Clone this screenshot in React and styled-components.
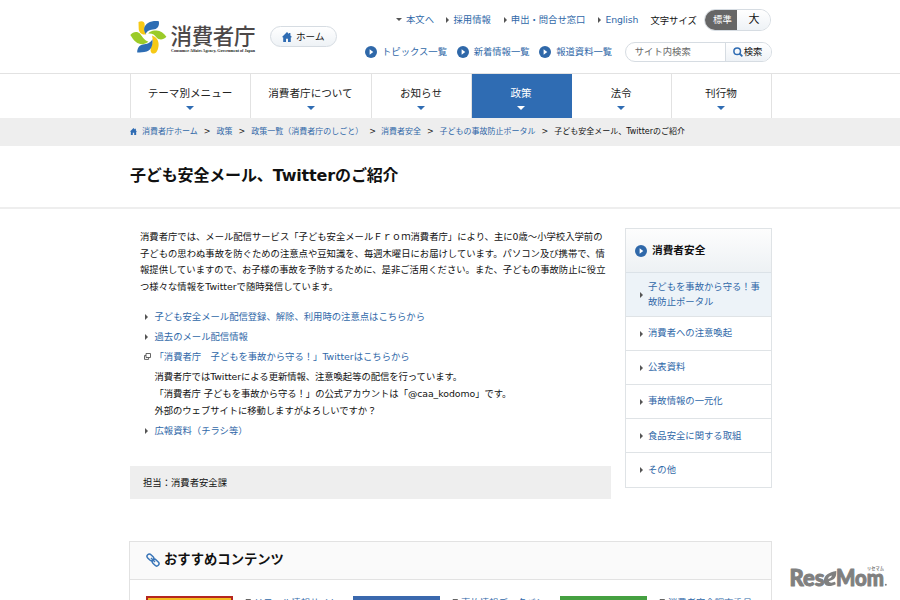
import styled, { createGlobalStyle, css } from "styled-components"

const topLinks = [
  { label: "本文へ", down: true },
  { label: "採用情報" },
  { label: "申出・問合せ窓口" },
  { label: "English" },
]

const listLinks = ["トピックス一覧", "新着情報一覧", "報道資料一覧"]

const navItems = [
  { label: "テーマ別メニュー", width: 120 },
  { label: "消費者庁について", width: 121 },
  { label: "お知らせ", width: 100 },
  { label: "政策", width: 100, active: true },
  { label: "法令", width: 100 },
  { label: "刊行物", width: 100 },
]

const crumbs = [
  { label: "消費者庁ホーム", width: 56 },
  { label: "政策", width: 16 },
  { label: "政策一覧（消費者庁のしごと）", width: 112 },
  { label: "消費者安全", width: 40 },
  { label: "子どもの事故防止ポータル", width: 96 },
]

const sideItems = [
  { label: "子どもを事故から守る！事故防止ポータル", active: true },
  { label: "消費者への注意喚起" },
  { label: "公表資料" },
  { label: "事故情報の一元化" },
  { label: "食品安全に関する取組" },
  { label: "その他" },
]

const cards = [
  { label: "リコール情報サイト", color: "#f3bd20", border: "#b5261e" },
  { label: "事故情報データバンク", color: "#3a68ad" },
  { label: "消費者安全調査委員会", color: "#45a041" },
]

function HomeIcon({ size }) {
  return (
    <svg width={size} height={size} viewBox="0 0 10 10" fill="#2f6cb3">
      <path d="M5 0 L0 5 L1.2 5.4 V10 H4 V6.8 H6 V10 H8.8 V5.4 L10 5 L8.4 3.4 V1 H7 V2 Z" />
    </svg>
  )
}

function CircleArrow() {
  return (
    <svg width="12" height="12" viewBox="0 0 12 12">
      <circle cx="6" cy="6" r="6" fill="#2f68a9" />
      <path d="M4.6 3.3 L8.3 6 L4.6 8.7 Z" fill="#fff" />
    </svg>
  )
}

function WindowIcon() {
  return (
    <svg width="7" height="7" viewBox="0 0 7 7" fill="none" stroke="#555">
      <path d="M2 .5 H6.5 V4.5 H2 Z M2 2.5 H.5 V6.4 H4.6 V4.5" strokeWidth=".9" />
    </svg>
  )
}

function ChainIcon() {
  return (
    <svg width="14" height="14" viewBox="0 0 14 14" fill="none" stroke="#3a76b8" strokeWidth="1.5">
      <rect x="0.6" y="2.1" width="7.6" height="4.6" rx="2.3" transform="rotate(45 4.4 4.4)" />
      <rect x="5.8" y="7.3" width="7.6" height="4.6" rx="2.3" transform="rotate(45 9.6 9.6)" />
      <path d="M5 5 L9 9" />
    </svg>
  )
}

function Logo() {
  return (
    <svg width="128" height="36" viewBox="0 0 128 36">
      <path d="M8.5 2 C12 .5 15 1.5 14.7 5.5 C14.5 9 14 11.5 16.4 14.2 C12 15.5 8.6 12.5 8.7 8.5 Z" fill="#f6c916" />
      <path d="M28.8 1.2 C29.7 5 28 8.6 24.5 9.2 C20 9.8 17.5 10.4 15.7 14 C12.8 9.5 14 5.5 18 3 C21 1.2 25 .8 28.8 1.2 Z" fill="#2d6db4" />
      <path d="M24.4 10.6 C29.2 9.7 33.4 12 36.4 16.8 C33 20.2 29 20.2 26.3 17.2 C24.5 14.8 22.4 13.2 18.2 13.6 C19.6 11.6 22 11 24.4 10.6 Z" fill="#9bcb28" />
      <path d="M22 15.6 C26.6 17.1 28.9 21 28.6 25.2 C28.3 29.6 26.7 33 24 33.6 C20.3 33.7 19.9 30 21.4 26.5 C22.8 23 23 19.5 22 15.6 Z" fill="#f6c916" />
      <path d="M22.4 19.3 C23 25.2 21.4 29.8 16.7 31.5 C13.5 32.6 10.5 32.2 7.2 32.6 C7.2 28.8 9 25.3 12.8 24.6 C17 23.9 20 23.4 22.4 19.3 Z" fill="#2d6db4" />
      <path d="M18.4 21.8 C14.5 25.1 9.3 24.8 6 22.1 C3.4 20 2 17.5 .3 15 C3 11.6 7.4 10.8 10.1 13.8 C12.5 16.8 14 20.2 18.4 21.8 Z" fill="#9bcb28" />
      <LogoName x="40.5" y="24.4" textLength="85">消費者庁</LogoName>
      <LogoSub x="41" y="32" textLength="84" lengthAdjust="spacingAndGlyphs">
        Consumer Affairs Agency, Government of Japan
      </LogoSub>
    </svg>
  )
}

function Watermark() {
  return (
    <WatermarkBox>
      <svg width="100" height="26" viewBox="0 0 100 26" fill="#808080">
        <MarkText x="1.5" y="20.6" textLength="35" lengthAdjust="spacingAndGlyphs">Res</MarkText>
        <path d="M35.8 16 C36 10 41 7.5 48.3 6 C48.5 12 47 14.8 40.8 16.2 C41.5 18 44 18 47 16.8 L47.8 19.3 C42 22.5 35.8 21.5 35.8 16 Z" />
        <path d="M39.8 13.8 C40.8 11.8 42 11 43.8 10.5 C43.8 12.4 42.2 13.4 39.8 13.8 Z" fill="#fff" />
        <MarkText x="48" y="20.6" textLength="48" lengthAdjust="spacingAndGlyphs">Mom</MarkText>
        <circle cx="97.8" cy="19.8" r="1" />
        <MarkKana x="79" y="4.8" textLength="17">リセマム</MarkKana>
      </svg>
    </WatermarkBox>
  )
}

export default function App() {
  return (
    <>
      <GlobalStyle />
      <Page>
        <Header>
          <LogoArea>
            <Logo />
          </LogoArea>
          <HomeButton>
            <HomeIcon size={10} />
            ホーム
          </HomeButton>
          <Tools>
            <TopRow>
              {topLinks.map((link) => (
                <TopLink key={link.label}>
                  {link.down ? <SmallDown /> : <SmallRight />}
                  {link.label}
                </TopLink>
              ))}
              <SizeLabel>文字サイズ</SizeLabel>
              <SizeSwitch>
                <SizeOption $active>標準</SizeOption>
                <SizeOption>大</SizeOption>
              </SizeSwitch>
            </TopRow>
            <SecondRow>
              {listLinks.map((label) => (
                <ListLink key={label}>
                  <CircleArrow />
                  {label}
                </ListLink>
              ))}
              <Search>
                <SearchField>サイト内検索</SearchField>
                <SearchButton>
                  <svg width="10" height="10" viewBox="0 0 10 10" fill="none" stroke="#2f6cb3">
                    <circle cx="4.2" cy="4.2" r="3.3" strokeWidth="1.5" />
                    <path d="M6.5 6.5 L9.4 9.4" strokeWidth="1.8" />
                  </svg>
                  検索
                </SearchButton>
              </Search>
            </SecondRow>
          </Tools>
        </Header>

        <Nav>
          {navItems.map((item) => (
            <NavItem key={item.label} $width={item.width} $active={item.active}>
              {item.label}
              <NavArrow $active={item.active} />
            </NavItem>
          ))}
        </Nav>

        <Breadcrumb>
          <HomeIcon size={7} />
          {crumbs.map((crumb) => (
            <Crumb key={crumb.label} $width={crumb.width}>
              {crumb.label}
            </Crumb>
          ))}
          <span>子ども安全メール、Twitterのご紹介</span>
        </Breadcrumb>

        <TitleBar>
          <h1>子ども安全メール、Twitterのご紹介</h1>
        </TitleBar>

        <Content>
          <Main>
            <Lead>
              消費者庁では、メール配信サービス「子ども安全メールＦｒｏｍ消費者庁」により、主に0歳～小学校入学前の<br />
              子どもの思わぬ事故を防ぐための注意点や豆知識を、毎週木曜日にお届けしています。パソコン及び携帯で、情<br />
              報提供していますので、お子様の事故を予防するために、是非ご活用ください。また、子どもの事故防止に役立<br />
              つ様々な情報をTwitterで随時発信しています。
            </Lead>
            <Links>
              <LinkRow>
                <SmallRight />
                <a>子ども安全メール配信登録、解除、利用時の注意点はこちらから</a>
              </LinkRow>
              <LinkRow>
                <SmallRight />
                <a>過去のメール配信情報</a>
              </LinkRow>
              <LinkRow>
                <WindowIcon />
                <a>「消費者庁　子どもを事故から守る！」Twitterはこちらから</a>
              </LinkRow>
              <Note>
                消費者庁ではTwitterによる更新情報、注意喚起等の配信を行っています。<br />
                「消費者庁 子どもを事故から守る！」の公式アカウントは「@caa_kodomo」です。<br />
                外部のウェブサイトに移動しますがよろしいですか？
              </Note>
              <LinkRow>
                <SmallRight />
                <a>広報資料（チラシ等）</a>
              </LinkRow>
            </Links>
            <Section>担当：消費者安全課</Section>
          </Main>

          <Side>
            <SideTitle>
              <CircleArrow />
              消費者安全
            </SideTitle>
            {sideItems.map((item) => (
              <SideItem key={item.label} $active={item.active}>
                <SmallRight />
                <span>{item.label}</span>
              </SideItem>
            ))}
          </Side>
        </Content>

        <Recommend>
          <RecommendTitle>
            <ChainIcon />
            おすすめコンテンツ
          </RecommendTitle>
          <Cards>
            {cards.map((card) => (
              <Card key={card.label}>
                <Thumb $color={card.color} $border={card.border} />
                <WindowIcon />
                <span>{card.label}</span>
              </Card>
            ))}
          </Cards>
        </Recommend>
        <Watermark />
      </Page>
    </>
  )
}

const blue = "#3068a8"

const GlobalStyle = createGlobalStyle`
  * { box-sizing: border-box; }
  body {
    margin: 0;
    background: #fff;
    overflow: hidden;
  }
  svg { display: block; flex: none; }
`

const Page = styled.div`
  position: relative;
  width: 900px;
  height: 600px;
  overflow: hidden;
  color: #111;
  font-family: "DejaVu Sans", "Noto Sans CJK JP", sans-serif;
  font-size: 9.33px;
  line-height: 14px;
  white-space: nowrap;
`

const Header = styled.header`
  display: flex;
  height: 74px;
  padding-left: 130px;
  border-bottom: 1px solid #e2e2e2;
`

const LogoArea = styled.div`
  width: 140px;
  padding-top: 20px;
`

const LogoName = styled.text`
  font-family: "Noto Sans CJK JP", sans-serif;
  font-size: 21.5px;
  font-weight: 500;
  fill: #4c4848;
`

const LogoSub = styled.text`
  font-family: "Liberation Serif", serif;
  font-size: 4.3px;
  font-weight: 700;
  fill: #222;
`

const HomeButton = styled.div`
  display: flex;
  align-items: center;
  gap: 4px;
  width: 67px;
  height: 21px;
  margin-top: 26px;
  padding-left: 11px;
  font-size: 9.6px;
  border: 1px solid #d6dce2;
  border-radius: 11px;
  background: linear-gradient(#fff, #eef2f6);
`

const Tools = styled.div`
  flex: 1;
  padding: 9px 0 0 28px;
`

const TopRow = styled.div`
  display: flex;
  align-items: center;
  height: 22px;
`

const SmallRight = styled.i`
  flex: none;
  border: solid transparent;
  border-width: 3px 0 3px 3px;
  border-left-color: #555;
`

const SmallDown = styled.i`
  flex: none;
  border: solid transparent;
  border-width: 3px 3px 0;
  border-top-color: #555;
`

const TopLink = styled.a`
  display: flex;
  align-items: center;
  gap: 4px;
  margin: 0 13px 1px 0;
  color: ${blue};

  &:first-child {
    margin-left: 31px;
    margin-right: 12.5px;
  }

  &:nth-child(4) {
    margin-right: 12px;
    letter-spacing: -0.1px;
  }
`

const SizeLabel = styled.span`
  width: 54px;
  margin-top: 1px;
`

const SizeSwitch = styled.div`
  display: flex;
  width: 67px;
  height: 22px;
  border: 1px solid #d6dce2;
  border-radius: 11px;
  overflow: hidden;
`

const SizeOption = styled.span`
  flex: 1;
  text-align: center;
  font-size: 11px;
  line-height: 20px;
  background: linear-gradient(#fff, #eef2f6);
  ${(props) =>
    props.$active &&
    css`
      flex: none;
      width: 33px;
      margin: -1px 0 -1px -1px;
      padding-left: 3px;
      font-size: 9.33px;
      line-height: 22px;
      color: #fff;
      background: #666;
    `}
`

const SecondRow = styled.div`
  display: flex;
  align-items: center;
  height: 20px;
  margin-top: 11px;
`

const ListLink = styled.a`
  display: flex;
  align-items: center;
  gap: 5px;
  margin-right: 9.6px;
  color: ${blue};
`

const Search = styled.div`
  display: flex;
  width: 147px;
  height: 20px;
  margin-left: 3px;
  border: 1px solid #d6dce2;
  border-radius: 10px;
  overflow: hidden;
`

const SearchField = styled.span`
  width: 100px;
  padding-left: 9px;
  line-height: 18px;
  color: #666;
  border-right: 1px solid #d6dce2;
`

const SearchButton = styled.span`
  flex: 1;
  display: flex;
  align-items: center;
  gap: 1px;
  padding-left: 7px;
  background: linear-gradient(#fff, #eef2f6);
`

const Nav = styled.nav`
  display: flex;
  width: 642px;
  height: 44px;
  margin-left: 130px;
  border-left: 1px solid #e2e2e2;
`

const NavItem = styled.a`
  display: flex;
  flex-direction: column;
  align-items: center;
  width: ${(props) => props.$width}px;
  padding: 12px 1px 0 0;
  border-right: 1px solid #e2e2e2;
  font-size: 10.6px;
  color: #222;
  ${(props) =>
    props.$active &&
    css`
      color: #fff;
      background: #2f6cb3;
      border-color: #2f6cb3;
    `}
`

const NavArrow = styled.i`
  margin-top: 6px;
  border: solid transparent;
  border-width: 4px 4px 0;
  border-top-color: ${(props) => (props.$active ? "#fff" : "#2f6cb3")};
`

const Breadcrumb = styled.div`
  display: flex;
  align-items: center;
  height: 28px;
  padding-left: 130px;
  background: #eee;
  font-size: 8px;

  svg {
    margin-bottom: 1px;
  }
`

const Crumb = styled.a`
  display: flex;
  width: ${(props) => props.$width + 18.6}px;
  color: ${blue};

  &:first-of-type {
    margin-left: 5px;
  }

  &::after {
    content: ">";
    margin-left: 6px;
    color: #222;
  }

  &:nth-of-type(3) {
    width: 129.8px;
  }
`

const TitleBar = styled.div`
  height: 63px;
  padding: 17px 0 0 130px;
  border-bottom: 2px solid #eee;

  h1 {
    margin: 0;
    font-size: 16px;
    line-height: 26px;
    letter-spacing: -0.15px;
  }
`

const Content = styled.div`
  display: flex;
  gap: 14px;
  height: 332px;
  padding: 19px 128px 0 130px;
`

const Main = styled.main`
  width: 481px;
`

const Lead = styled.p`
  margin: 1px 0 0 10px;
  line-height: 16.7px;
`

const Links = styled.div`
  margin: 11px 0 0 14px;
`

const LinkRow = styled.div`
  display: flex;
  align-items: center;
  height: 20px;

  a {
    color: ${blue};
  }

  i {
    margin: 0 6.5px 0 1px;
  }

  svg {
    margin-right: 3.5px;
  }
`

const Note = styled.p`
  margin: 1px 0 2px 10.5px;
  line-height: 17px;
  letter-spacing: -0.05px;
`

const Section = styled.div`
  height: 33px;
  margin-top: 25px;
  padding-left: 13px;
  line-height: 33px;
  background: #eee;
`

const Side = styled.aside`
  width: 147px;
  height: 260px;
  border: 1px solid #dfe3e6;
`

const SideTitle = styled.div`
  display: flex;
  align-items: center;
  gap: 5px;
  height: 44px;
  padding-left: 9px;
  font-size: 10.67px;
  font-weight: 700;
  background: linear-gradient(#fdfdfd, #edf1f4);
  border-bottom: 1px solid #dbe2e8;
`

const SideItem = styled.a`
  display: flex;
  align-items: center;
  gap: 5px;
  height: 34.1px;
  padding-left: 14px;
  color: ${blue};
  border-bottom: 1px solid #dfe3e6;

  &:last-child {
    border: 0;
  }

  span {
    width: 114px;
    white-space: normal;
    line-height: 14.5px;
  }

  ${(props) =>
    props.$active &&
    css`
      height: 44px;
      background: #edf3f8;
    `}
`

const Recommend = styled.section`
  width: 643px;
  margin-left: 129px;
  border: 1px solid #e2e2e2;
`

const RecommendTitle = styled.div`
  display: flex;
  align-items: center;
  gap: 4px;
  height: 38px;
  padding: 0 0 1px 16px;
  font-size: 13.33px;
  font-weight: 700;
  background: #fafafa;
  border-bottom: 1px solid #e2e2e2;
`

const Cards = styled.div`
  display: flex;
  padding: 16px 0 0 16px;
`

const Card = styled.div`
  display: flex;
  width: 207px;
  height: 60px;
  color: ${blue};

  svg {
    margin: 3px 3px 0 11px;
  }

  span {
    width: 85px;
    white-space: normal;
  }
`

const Thumb = styled.div`
  flex: none;
  width: 87px;
  height: 60px;
  background: ${(props) => props.$color};
  border: 2px solid ${(props) => props.$border || props.$color};
`

const WatermarkBox = styled.div`
  position: absolute;
  left: 788px;
  top: 565px;
`

const MarkText = styled.text`
  font-family: Lato, sans-serif;
  font-size: 23px;
  font-weight: 900;
  stroke: #808080;
  stroke-width: 1px;
  stroke-linejoin: round;
`

const MarkKana = styled.text`
  font-family: "Noto Sans CJK JP", sans-serif;
  font-size: 4.2px;
  font-weight: 700;
`
